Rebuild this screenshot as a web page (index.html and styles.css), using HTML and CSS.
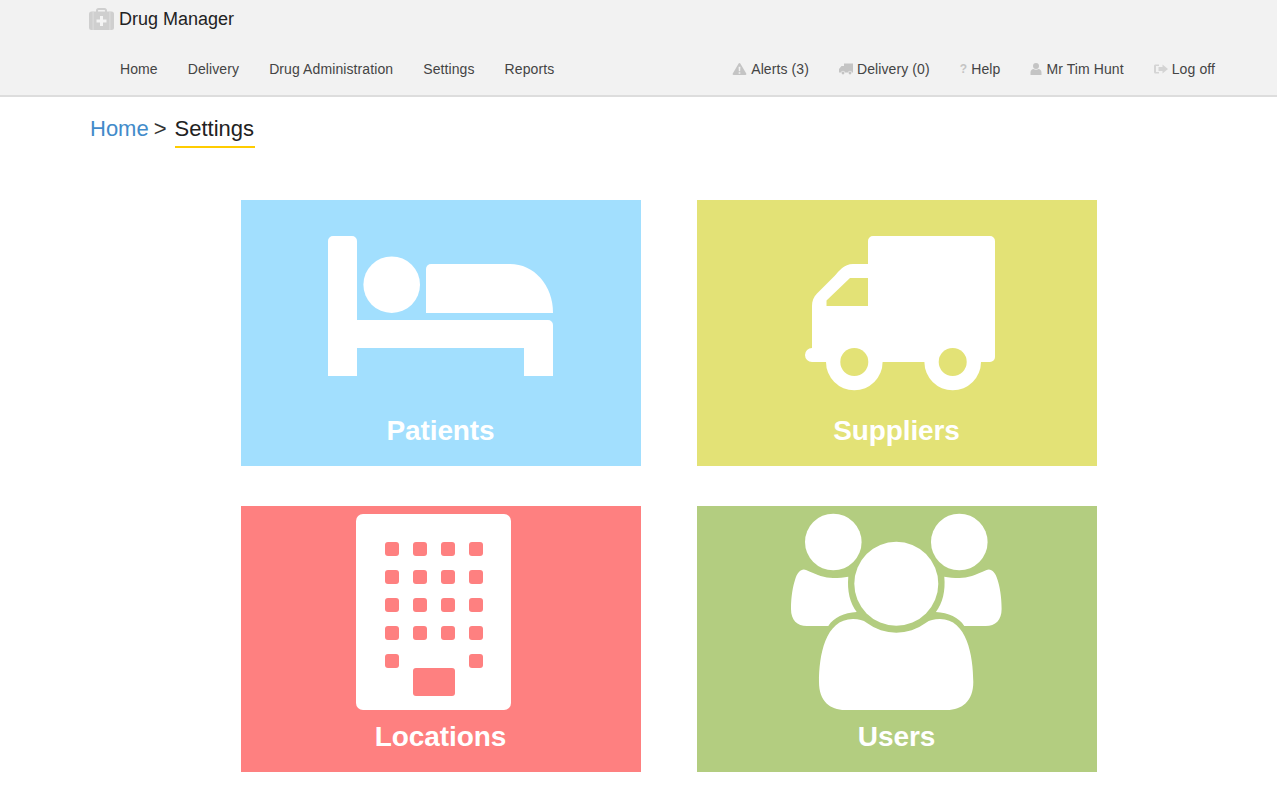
FILE: index.html
```html
<!DOCTYPE html>
<html lang="en">
<head>
    <meta charset="UTF-8">
    <meta name="viewport" content="width=device-width, initial-scale=1.0">
    <title>Drug Manager - Settings</title>
    <link rel="stylesheet" href="styles.css">
</head>
<body>
    <header class="header">
        <div class="brand">
            <svg class="brand-icon" viewBox="0 0 25 22">
                <path fill="#cfcfcf" d="M7 4V2.500C7 1 8 0 9.500 0h6C17 0 18 1 18 2.500V4h-2V2.500c0-.4-.2-.6-.6-.6H9.600c-.4 0-.6.2-.6.6V4z"/>
                <rect fill="#cfcfcf" x="0" y="3.500" width="25" height="18.500" rx="2.500"/>
                <path fill="#dcdcdc" d="M3.500 3.500h1.200V22H3.500zM20.300 3.500h1.200V22h-1.200z"/>
                <path fill="#f4f4f4" d="M11 8h3v3.500h3.500v3H14V18h-3v-3.500H7.500v-3H11z"/>
            </svg>
            <span class="brand-name">Drug Manager</span>
        </div>
        <nav class="nav">
            <ul class="nav-list">
                <li><a href="#">Home</a></li>
                <li><a href="#">Delivery</a></li>
                <li><a href="#">Drug Administration</a></li>
                <li><a href="#">Settings</a></li>
                <li><a href="#">Reports</a></li>
            </ul>
            <ul class="nav-list nav-right">
                <li><a href="#">
                    <svg class="nav-icon icon-alert" viewBox="0 0 15 13"><path fill-rule="evenodd" d="M7.500 0c.4 0 .7.200.9.500l6.400 11c.4.700 0 1.500-.9 1.500H1.100c-.9 0-1.300-.8-.9-1.500l6.400-11c.2-.3.500-.5.900-.5zM6.500 4l.3 5h1.400l.3-5zM6.600 10v1.700h1.800V10z"/></svg>
                    Alerts (3)</a></li>
                <li><a href="#">
                    <svg class="nav-icon icon-truck" viewBox="0 0 14 11"><path d="M5 0h9v9h-1.200a1.800 1.800 0 0 0-3.600 0H5.800a1.800 1.800 0 0 0-3.600 0H0V5.500L2.500 2.500H5z"/><circle cx="4" cy="9.500" r="1.400"/><circle cx="11" cy="9.500" r="1.400"/></svg>
                    Delivery (0)</a></li>
                <li><a href="#"><span class="nav-glyph">?</span>Help</a></li>
                <li><a href="#">
                    <svg class="nav-icon icon-user" viewBox="0 0 11 12"><circle cx="5.500" cy="3" r="3"/><path d="M0 12V9.500C0 7.500 1.500 6 3 6c.7.500 1.500.8 2.500.8S7.300 6.500 8 6c1.500 0 3 1.500 3 3.500V12z"/></svg>
                    Mr Tim Hunt</a></li>
                <li><a href="#">
                    <svg class="nav-icon icon-logoff" viewBox="0 0 14 11"><path d="M1.500 1H5v1.500H2v6h3V10H1.500C.6 10 0 9.400 0 8.500v-6C0 1.600.6 1 1.500 1zM8.500 1 14 5.500 8.500 10V7.500H4.500v-4h4z"/></svg>
                    Log off</a></li>
            </ul>
        </nav>
    </header>

    <div class="breadcrumb">
        <a class="crumb-link" href="#">Home</a>
        <span class="crumb-sep">&gt;</span>
        <span class="crumb-current">Settings</span>
    </div>

    <main class="tiles">
        <a class="tile tile-patients" href="#">
            <svg class="tile-icon" viewBox="0 0 400 210">
                <path d="M87 41a5 5 0 0 1 5-5h19a5 5 0 0 1 5 5v79h191a5 5 0 0 1 5 5v51h-29v-28H116v28H87z"/>
                <circle cx="150.700" cy="84.700" r="28.300"/>
                <path d="M185 69a5 5 0 0 1 5-5h79c24 0 43 21 43 49H185z"/>
            </svg>
            <span class="tile-label">Patients</span>
        </a>
        <a class="tile tile-suppliers" href="#">
            <svg class="tile-icon" viewBox="0 0 400 210">
                <path fill-rule="evenodd" d="M171 41a5 5 0 0 1 5-5h117a5 5 0 0 1 5 5v116a5 5 0 0 1-5 5H115a7 7 0 0 1 0-14V106c0-5 1.500-9 5-12.500l18-18C142 71 147 64 156 64h15zM171 78h-18L129.500 100.500V106H171z"/>
                <circle cx="157.300" cy="162" r="28.300"/>
                <circle cx="255.700" cy="162" r="28.300"/>
                <circle class="hole-suppliers" cx="157.300" cy="162" r="14"/>
                <circle class="hole-suppliers" cx="255.700" cy="162" r="14"/>
            </svg>
            <span class="tile-label">Suppliers</span>
        </a>
        <a class="tile tile-locations" href="#">
            <svg class="tile-icon" viewBox="0 0 400 210">
                <rect x="115" y="8" width="155" height="196" rx="7"/>
                <g class="hole-locations">
                    <rect x="144" y="36" width="14" height="14" rx="3"/>
                    <rect x="172" y="36" width="14" height="14" rx="3"/>
                    <rect x="200" y="36" width="14" height="14" rx="3"/>
                    <rect x="228" y="36" width="14" height="14" rx="3"/>
                    <rect x="144" y="64" width="14" height="14" rx="3"/>
                    <rect x="172" y="64" width="14" height="14" rx="3"/>
                    <rect x="200" y="64" width="14" height="14" rx="3"/>
                    <rect x="228" y="64" width="14" height="14" rx="3"/>
                    <rect x="144" y="92" width="14" height="14" rx="3"/>
                    <rect x="172" y="92" width="14" height="14" rx="3"/>
                    <rect x="200" y="92" width="14" height="14" rx="3"/>
                    <rect x="228" y="92" width="14" height="14" rx="3"/>
                    <rect x="144" y="120" width="14" height="14" rx="3"/>
                    <rect x="172" y="120" width="14" height="14" rx="3"/>
                    <rect x="200" y="120" width="14" height="14" rx="3"/>
                    <rect x="228" y="120" width="14" height="14" rx="3"/>
                    <rect x="144" y="148" width="14" height="14" rx="3"/>
                    <rect x="228" y="148" width="14" height="14" rx="3"/>
                    <rect x="172" y="162" width="42" height="28" rx="3"/>
                </g>
            </svg>
            <span class="tile-label">Locations</span>
        </a>
        <a class="tile tile-users" href="#">
            <svg class="tile-icon" viewBox="0 0 400 210">
                <circle cx="136.300" cy="36" r="28.300"/>
                <circle cx="262.300" cy="36" r="28.300"/>
                <circle cx="199.300" cy="77.700" r="42"/>
                <path d="M122 176C122 150 128 113 156 113C162 113 166 114 170 117A49 49 0 0 0 228.600 117C232.600 114 237 113 243 113C270 113 276.300 150 276.300 176C276.300 195 265 204 250 204H148C133 204 122 195 122 176Z"/>
                <path d="M109 64C120 69 128 72 136 72C142 72 147 71.500 151.300 70.700C150 85 153 97 159.700 106C147 107 137 111 131.300 120H110C100 120 94 114 94 103C94 90 96 80 98 74C100 66 105 62 109 64Z"/>
                <path d="M109 64C120 69 128 72 136 72C142 72 147 71.500 151.300 70.700C150 85 153 97 159.700 106C147 107 137 111 131.300 120H110C100 120 94 114 94 103C94 90 96 80 98 74C100 66 105 62 109 64Z" transform="translate(398.600 0) scale(-1 1)"/>
            </svg>
            <span class="tile-label">Users</span>
        </a>
    </main>
</body>
</html>
```

FILE: styles.css
```css
* {
    margin: 0;
    padding: 0;
    box-sizing: border-box;
}

body {
    font-family: "Liberation Sans", Arial, sans-serif;
    background-color: #fff;
    color: #333;
}

a {
    text-decoration: none;
}

.header {
    height: 97px;
    padding-left: 89px;
    background-color: #f2f2f2;
    border-bottom: 2px solid #ddd;
}

.brand {
    display: flex;
    align-items: center;
    gap: 5px;
    height: 38px;
}

.brand-icon {
    width: 25px;
    height: 22px;
}

.brand-name {
    font-size: 18px;
    color: #222;
}

.nav {
    display: flex;
    justify-content: space-between;
    padding: 0 47px 0 16px;
}

.nav-list {
    display: flex;
    list-style-type: none;
}

.nav-list a {
    display: flex;
    align-items: center;
    height: 62px;
    padding: 0 15px;
    font-size: 14px;
    letter-spacing: 0.1px;
    color: #444;
}

.nav-icon {
    height: 12px;
    margin-right: 4px;
    fill: #c4c4c4;
}

.icon-alert {
    width: 15px;
}

.icon-truck {
    width: 14px;
}

.icon-user {
    width: 12px;
}

.icon-logoff {
    width: 14px;
    fill: #d4d4d4;
}

.nav-glyph {
    margin-right: 4px;
    font-weight: bold;
    font-size: 12px;
    color: #c4c4c4;
}

.breadcrumb {
    display: flex;
    align-items: flex-start;
    height: 103px;
    padding: 19px 0 0 90px;
    font-size: 22px;
}

.crumb-link {
    color: #428bca;
}

.crumb-sep {
    margin: 0 8px 0 5px;
}

.crumb-current {
    height: 32px;
    padding-right: 1px;
    color: #222;
    border-bottom: 2px solid #fc0;
}

.tiles {
    display: grid;
    grid-template-columns: 400px 400px;
    grid-auto-rows: 266px;
    column-gap: 56px;
    row-gap: 40px;
    margin-left: 241px;
}

.tile {
    display: block;
    color: #fff;
}

.tile-icon {
    display: block;
    width: 400px;
    height: 210px;
    fill: #fff;
}

.tile-label {
    display: block;
    padding-right: 1px;
    font-size: 28px;
    font-weight: bold;
    letter-spacing: -0.1px;
    line-height: 42px;
    text-align: center;
}

.tile-patients {
    background-color: #a2dffe;
}

.tile-suppliers {
    background-color: #e3e276;
}

.tile-locations {
    background-color: #fe8080;
}

.tile-users {
    background-color: #b3cd80;
}

.hole-suppliers {
    fill: #e3e276;
}

.hole-locations {
    fill: #fe8080;
}
```
